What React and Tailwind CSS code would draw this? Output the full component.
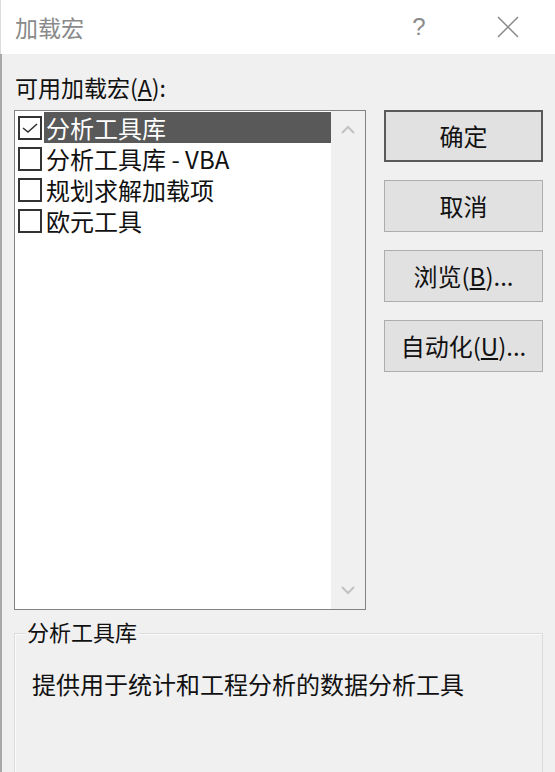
import React from "react";

const font = { fontFamily: '"Noto Sans CJK SC", "Noto Sans", sans-serif' };

function Check({ checked }) {
  return (
    <div className="w-[24px] h-[24px] border-2 border-[#333333] bg-white shrink-0 flex items-center justify-center">
      {checked && (
        <svg width="18" height="14" viewBox="0 0 18 14">
          <path d="M2 7 L7 11 L16 3" fill="none" stroke="#333" strokeWidth="1.6" />
        </svg>
      )}
    </div>
  );
}

function Item({ label, checked, selected }) {
  return (
    <div className="flex items-center h-[31px]">
      <div className="pl-[3px] pr-[2px]">
        <Check checked={checked} />
      </div>
      <div
        className={
          "flex-1 h-full flex items-center pl-[2px] " +
          (selected ? "bg-[#595959] text-white" : "text-[#111]")
        }
      >
        <span className="text-[24px] leading-[24px] block">{label}</span>
      </div>
    </div>
  );
}

function Btn({ children, primary }) {
  return (
    <div
      className={
        "h-[52px] flex items-center justify-center text-[24px] leading-none text-[#111] bg-[#e1e1e1] " +
        (primary ? "border-2 border-[#5a5a5a]" : "border border-[#adadad]")
      }
    >
      {children}
    </div>
  );
}

export default function App() {
  return (
    <div className="w-[555px] h-[772px] overflow-hidden bg-[#f0f0f0] flex flex-col" style={font}>
      <div className="h-[54px] bg-white flex items-center shrink-0 border-l border-[#dcdcdc]">
        <div className="pl-[14px] text-[23px] text-[#8a8a8a] flex-1">加载宏</div>
        <div className="text-[24px] text-[#8a8a8a] w-[20px] mr-[68px] text-center" style={{ fontFamily: '"Liberation Sans", sans-serif' }}>?</div>
        <svg width="22" height="22" viewBox="0 0 22 22" className="mr-[36px]">
          <path d="M1 1 L21 21 M21 1 L1 21" stroke="#8a8a8a" strokeWidth="1.5" fill="none" />
        </svg>
      </div>
      <div className="flex-1 border-l-2 border-[#a8a8a8] flex flex-col">
        <div className="pl-[13px] pt-[22px] text-[23px] leading-none text-[#111] h-[56px]">
          可用加载宏(<span className="underline underline-offset-2">A</span>):
        </div>
        <div className="flex pl-[12px]">
          <div className="w-[352px] h-[500px] border border-[#828282] bg-white flex">
            <div className="flex-1 pt-[1px]">
              <Item label="分析工具库" checked selected />
              <Item label="分析工具库 - VBA" />
              <Item label="规划求解加载项" />
              <Item label="欧元工具" />
            </div>
            <div className="w-[34px] bg-[#f0f0f0] flex flex-col items-center justify-between py-[14px]">
              <svg width="14" height="9" viewBox="0 0 14 9">
                <path d="M1 8 L7 2 L13 8" stroke="#c2c2c2" strokeWidth="2" fill="none" />
              </svg>
              <svg width="14" height="9" viewBox="0 0 14 9">
                <path d="M1 1 L7 7 L13 1" stroke="#c2c2c2" strokeWidth="2" fill="none" />
              </svg>
            </div>
          </div>
          <div className="ml-[18px] w-[159px] flex flex-col gap-[18px]">
            <Btn primary>确定</Btn>
            <Btn>取消</Btn>
            <Btn>
              浏览(<span className="underline underline-offset-2">B</span>)...
            </Btn>
            <Btn>
              自动化(<span className="underline underline-offset-2">U</span>)...
            </Btn>
          </div>
        </div>
        <div className="relative ml-[12px] mr-[12px] mt-[23px] flex-1 border border-[#dcdcdc] border-b-0 shadow-[inset_1px_1px_0_#fafafa]">
          <div className="absolute left-[10px] -top-[14px] bg-[#f0f0f0] px-[2px] text-[22px] leading-none text-[#111]">
            分析工具库
          </div>
          <div className="pl-[17px] pt-[38px] text-[24px] leading-none text-[#111]">
            提供用于统计和工程分析的数据分析工具
          </div>
        </div>
      </div>
    </div>
  );
}
